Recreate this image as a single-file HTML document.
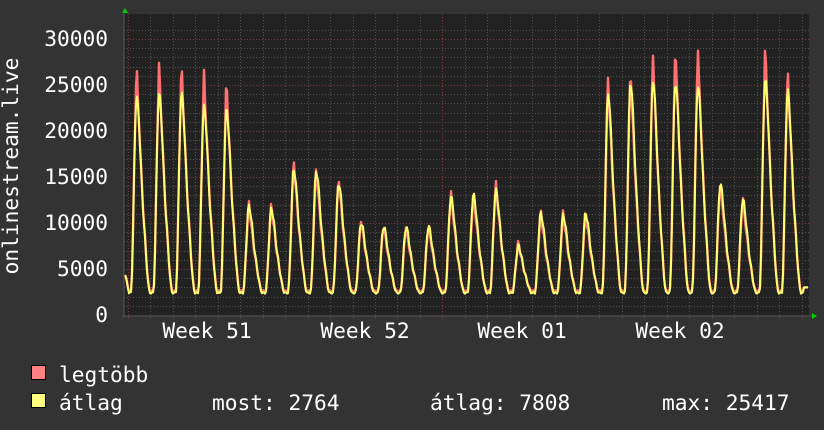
<!DOCTYPE html>
<html><head><meta charset="utf-8"><style>
html,body{margin:0;padding:0;background:#333333;}
body{width:824px;height:430px;overflow:hidden;position:relative;font-family:"DejaVu Sans Mono","Liberation Mono",monospace;color:#fff;}
svg{position:absolute;left:0;top:0;}
</style></head><body>
<svg id="g" width="824" height="430" xmlns="http://www.w3.org/2000/svg" font-family="DejaVu Sans Mono, Liberation Mono, monospace" font-size="21.2" fill="#fff">
<rect x="0" y="0" width="824" height="430" fill="#333333"/>
<rect x="124" y="14" width="685" height="302" fill="#222222"/>
<g id="grid"></g>
<g id="data"></g>
<line x1="122" y1="316" x2="812" y2="316" stroke="#555" stroke-width="1"/>
<line x1="124" y1="12" x2="124" y2="318" stroke="#555" stroke-width="1"/>
<polygon points="122,13 128,13 125,8" fill="#00cc00"/>
<polygon points="812,313 812,319 817,316" fill="#00cc00"/>
<g text-anchor="end">
<text x="108" y="46">30000</text>
<text x="108" y="92">25000</text>
<text x="108" y="138">20000</text>
<text x="108" y="184">15000</text>
<text x="108" y="230">10000</text>
<text x="108" y="276">5000</text>
<text x="108" y="322">0</text>
</g>
<g text-anchor="middle">
<text x="207" y="338">Week 51</text>
<text x="365" y="338">Week 52</text>
<text x="522" y="338">Week 01</text>
<text x="680" y="338">Week 02</text>
</g>
<text transform="translate(18,166) rotate(-90)" text-anchor="middle">onlinestream.live</text>
<rect x="31.5" y="365.5" width="14" height="14" fill="#ff8080" stroke="#000"/>
<rect x="31.5" y="393.5" width="14" height="14" fill="#ffff80" stroke="#000"/>
<text x="59" y="382">legtöbb</text>
<text x="59" y="410">átlag</text>
<text x="212" y="410">most: 2764</text>
<text x="430" y="410">átlag: 7808</text>
<text x="662" y="410">max: 25417</text>
</svg>
<script>
(function(){
var NS="http://www.w3.org/2000/svg";
var grid=document.getElementById('grid'),data=document.getElementById('data');
function ln(x1,y1,x2,y2,c){var l=document.createElementNS(NS,'line');l.setAttribute('x1',x1);l.setAttribute('y1',y1);l.setAttribute('x2',x2);l.setAttribute('y2',y2);l.setAttribute('stroke',c);l.setAttribute('stroke-width','1');l.setAttribute('stroke-dasharray','1,2');grid.appendChild(l);}
var Y=function(v){return 315-v*0.0092;};
for(var k=1;k<=31;k++){var v=k*1000;var y=Math.round(Y(v))+0.5;if(y<15)break;ln(124,y,809,y,k%5==0?'#7a3a3a':'#505050');}
for(var i=0;i<31;i++){var x=Math.round(128+22.45*i)+0.5;if(x>809)break;var wk=(i%7==0);ln(x,14,x,318,wk?'#7a3a3a':'#505050');}
var R=[27.4,27.6,27.5,26.4,25.7,12.3,12.2,17,16.2,15.2,10.5,10,9.8,10,13.5,13.5,14.5,8,11.4,11.3,11.4,26,27,28.5,29.5,29.3,14.8,12.9,29.5,26.8,4];
var A=[23.7,24,24,22.6,22.3,11.8,11.5,15.8,15.6,14.3,10,9.6,9.5,9.6,12.8,13,13.5,7.5,11,10.8,11,24,25.3,25.5,25.2,25,14.2,12.5,25.5,24.3,3.5];
function shape(ph,sharp){if(ph<0.08)return 0;var f;if(ph<0.34){var u=(ph-0.08)/0.26;f=(1-Math.cos(Math.PI*u))/2;}else{var d=(ph-0.34)/0.6;if(d>=1)return 0;f=(1+Math.cos(Math.PI*d))/2;f=f*(0.9+0.1*Math.cos(d*7));}
if(sharp){var c=Math.abs(ph-0.34);var sp=Math.max(0,1-c/0.06);f=f*0.86+0.14*sp;}return f;}
function series(P,base,sharp){var pts=[];for(var x=125;x<=808;x++){var t=(x-129)/22.45;var day=Math.floor(t);var ph=t-day;var v;if(day<0){v=2500+(129-x)*500;}else{var pk=P[Math.min(day,P.length-1)]*1000;v=base+(pk-base)*shape(ph,sharp);}v+=Math.sin(x*1.7)*Math.min(1,v/8000)*300;if(x>=804)v=3000;pts.push(x+','+Y(v).toFixed(1));}return pts.join(' ');}
function pl(p,c,w){var e=document.createElementNS(NS,'polyline');e.setAttribute('points',p);e.setAttribute('fill','none');e.setAttribute('stroke',c);e.setAttribute('stroke-width',w);e.setAttribute('stroke-linejoin','round');data.appendChild(e);}
pl(series(R,2600,true),'#ff7070',2.4);
pl(series(A,2400,false),'#ffff70',2);
})();
</script>
</body></html>
